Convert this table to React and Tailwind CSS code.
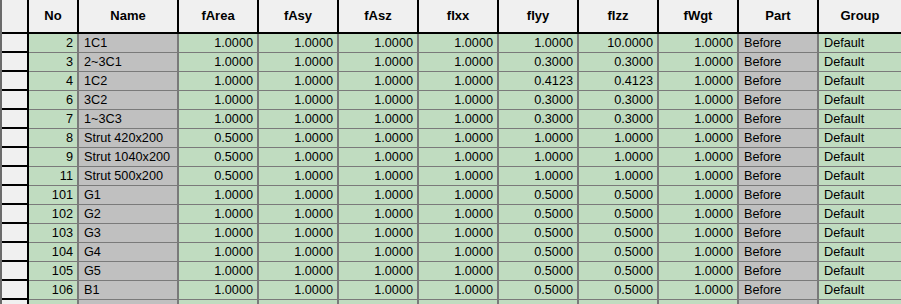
import React from "react";

const cols = [
  { key: "no", label: "No", w: "w-[50px]", bg: "bg-[#c0dcc0]", align: "text-right" },
  { key: "name", label: "Name", w: "w-[100px]", bg: "bg-[#c0c0c0]", align: "text-left" },
  { key: "fArea", label: "fArea", w: "w-[80px]", bg: "bg-[#c0dcc0]", align: "text-right" },
  { key: "fAsy", label: "fAsy", w: "w-[80px]", bg: "bg-[#c0dcc0]", align: "text-right" },
  { key: "fAsz", label: "fAsz", w: "w-[80px]", bg: "bg-[#c0dcc0]", align: "text-right" },
  { key: "fIxx", label: "fIxx", w: "w-[80px]", bg: "bg-[#c0dcc0]", align: "text-right" },
  { key: "fIyy", label: "fIyy", w: "w-[80px]", bg: "bg-[#c0dcc0]", align: "text-right" },
  { key: "fIzz", label: "fIzz", w: "w-[80px]", bg: "bg-[#c0dcc0]", align: "text-right" },
  { key: "fWgt", label: "fWgt", w: "w-[80px]", bg: "bg-[#c0dcc0]", align: "text-right" },
  { key: "part", label: "Part", w: "w-[80px]", bg: "bg-[#c0c0c0]", align: "text-left" },
  { key: "group", label: "Group", w: "flex-1", bg: "bg-[#c0dcc0]", align: "text-left" },
];

const mk = (no, name, area, iyy, izz) => ({
  no,
  name,
  fArea: area,
  fAsy: "1.0000",
  fAsz: "1.0000",
  fIxx: "1.0000",
  fIyy: iyy,
  fIzz: izz,
  fWgt: "1.0000",
  part: "Before",
  group: "Default",
});

const rows = [
  mk(2, "1C1", "1.0000", "1.0000", "10.0000"),
  mk(3, "2~3C1", "1.0000", "0.3000", "0.3000"),
  mk(4, "1C2", "1.0000", "0.4123", "0.4123"),
  mk(6, "3C2", "1.0000", "0.3000", "0.3000"),
  mk(7, "1~3C3", "1.0000", "0.3000", "0.3000"),
  mk(8, "Strut 420x200", "0.5000", "1.0000", "1.0000"),
  mk(9, "Strut 1040x200", "0.5000", "1.0000", "1.0000"),
  mk(11, "Strut 500x200", "0.5000", "1.0000", "1.0000"),
  mk(101, "G1", "1.0000", "0.5000", "0.5000"),
  mk(102, "G2", "1.0000", "0.5000", "0.5000"),
  mk(103, "G3", "1.0000", "0.5000", "0.5000"),
  mk(104, "G4", "1.0000", "0.5000", "0.5000"),
  mk(105, "G5", "1.0000", "0.5000", "0.5000"),
  mk(106, "B1", "1.0000", "0.5000", "0.5000"),
];

export default function App() {
  return (
    <div
      className="w-[901px] h-[304px] overflow-hidden bg-[#f0f0f0] border-l-2 border-[#6a6a6a] text-black"
      style={{ fontFamily: '"Liberation Sans", Arial, sans-serif' }}
    >
      {/* header */}
      <div className="flex h-[34px] border-b-2 border-black">
        <div className="w-[27px] shrink-0 border-r-2 border-black bg-[#f0f0f0]" />
        {cols.map((c) => (
          <div
            key={c.key}
            className={`${c.w} shrink-0 flex items-center justify-center text-[13px] font-bold bg-[#f0f0f0] ${
              c.key === "group" ? "" : "border-r-2 border-black"
            }`}
          >
            {c.label}
          </div>
        ))}
      </div>

      {/* rows */}
      {[...rows, null].map((r, i) => (
        <div key={i} className="flex h-[19px]">
          <div className="w-[27px] shrink-0 border-r-2 border-b-2 border-black bg-[#f0f0f0]" />
          {cols.map((c) => (
            <div
              key={c.key}
              className={`${c.w} shrink-0 ${c.bg} ${c.align} border-b border-[#7a7a7a] ${
                c.key === "group" ? "" : "border-r-2"
              } pl-[5px] pr-[4px] text-[12.7px] leading-[18px] whitespace-nowrap overflow-hidden`}
            >
              {r ? r[c.key] : ""}
            </div>
          ))}
        </div>
      ))}
    </div>
  );
}
